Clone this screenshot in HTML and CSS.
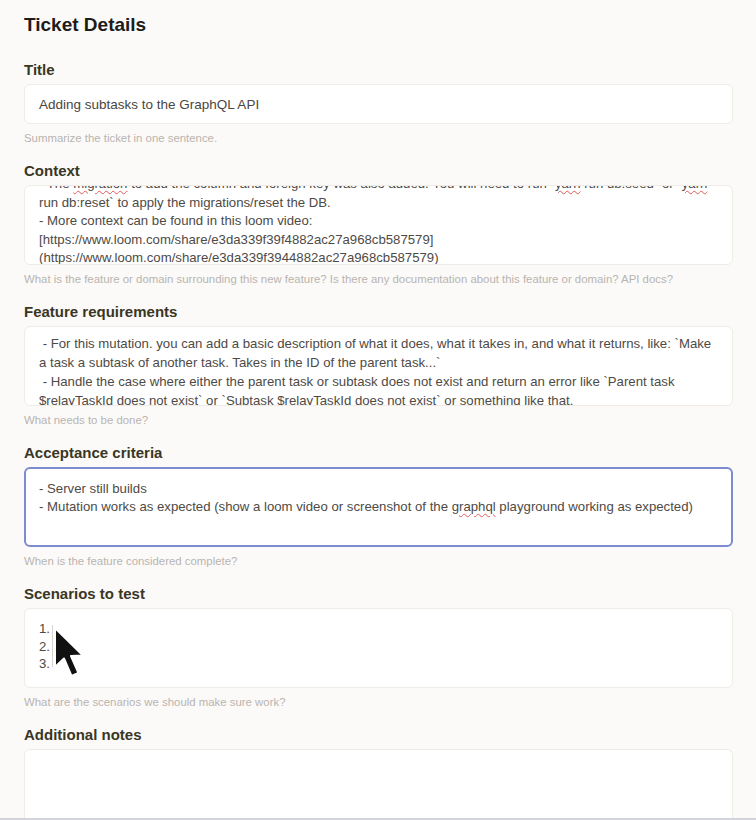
FILE: index.html
```html
<!DOCTYPE html>
<html lang="en">
<head>
<meta charset="utf-8">
<title>Ticket Details</title>
<link rel="stylesheet" href="styles.css">
</head>
<body>
<main class="page">
  <h1 class="page-title">Ticket Details</h1>

  <section class="field">
    <label class="field-label">Title</label>
    <div class="input">Adding subtasks to the GraphQL API</div>
    <p class="help">Summarize the ticket in one sentence.</p>
  </section>

  <section class="field">
    <label class="field-label">Context</label>
    <div class="textarea">
      <div class="scroll scroll-context">
        <div class="line">- The <span class="spell">migration</span> to add the column and foreign key was also added. You will need to run `<span class="spell">yarn</span> run db:seed` or `<span class="spell">yarn</span></div>
        <div class="line">run db:reset` to apply the migrations/reset the DB.</div>
        <div class="line">- More context can be found in this loom video:</div>
        <div class="line">[https://www.loom.com/share/e3da339f39f4882ac27a968cb587579]</div>
        <div class="line">(https://www.loom.com/share/e3da339f3944882ac27a968cb587579)</div>
      </div>
    </div>
    <p class="help">What is the feature or domain surrounding this new feature? Is there any documentation about this feature or domain? API docs?</p>
  </section>

  <section class="field">
    <label class="field-label">Feature requirements</label>
    <div class="textarea">
      <div class="scroll scroll-feature">
        <div class="line">&nbsp;- For this mutation. you can add a basic description of what it does, what it takes in, and what it returns, like: `Make</div>
        <div class="line">a task a subtask of another task. Takes in the ID of the parent task...`</div>
        <div class="line">&nbsp;- Handle the case where either the parent task or subtask does not exist and return an error like `Parent task</div>
        <div class="line">$relayTaskId does not exist` or `Subtask $relayTaskId does not exist` or something like that.</div>
      </div>
    </div>
    <p class="help">What needs to be done?</p>
  </section>

  <section class="field">
    <label class="field-label">Acceptance criteria</label>
    <div class="textarea textarea-focus">
      <div class="scroll scroll-accept">
        <div class="line">- Server still builds</div>
        <div class="line">- Mutation works as expected (show a loom video or screenshot of the <span class="spell">graphql</span> playground working as expected)</div>
      </div>
    </div>
    <p class="help">When is the feature considered complete?</p>
  </section>

  <section class="field">
    <label class="field-label">Scenarios to test</label>
    <div class="textarea">
      <div class="scroll scroll-scen">
        <div class="line">1.</div>
        <div class="line">2.</div>
        <div class="line">3.</div>
      </div>
      <span class="caret"></span>
      <svg class="pointer" width="34" height="56" viewBox="0 0 34 56" aria-hidden="true">
        <path d="M3 2 L3 41 L12 32.5 L19.5 50 L26.5 47 L19 30 L31 29.5 Z" fill="#111" stroke="#fff" stroke-width="2" stroke-linejoin="round"/>
      </svg>
    </div>
    <p class="help">What are the scenarios we should make sure work?</p>
  </section>

  <section class="field">
    <label class="field-label">Additional notes</label>
    <div class="textarea textarea-notes"></div>
  </section>
</main>
<div class="viewport-edge"></div>
</body>
</html>
```

FILE: styles.css
```css
html, body {
  margin: 0;
  padding: 0;
}

body {
  background: #fbfaf9;
  font-family: "Liberation Sans", Arial, sans-serif;
  color: #3d3a36;
  overflow: hidden;
}

.page {
  padding: 14px 23px 0 24px;
  display: flex;
  flex-direction: column;
}

.page-title {
  margin: 0 0 25px 0;
  font-size: 19px;
  line-height: 22px;
  font-weight: 700;
  color: #1d1c1a;
}

.field {
  display: flex;
  flex-direction: column;
  margin-bottom: 17px;
}

.field-label {
  display: block;
  font-size: 15px;
  line-height: 18px;
  font-weight: 700;
  color: #3a3624;
  margin-bottom: 5px;
}

.input {
  height: 40px;
  box-sizing: border-box;
  background: #fff;
  border: 1px solid #efebe7;
  border-radius: 6px;
  padding: 0 14px;
  display: flex;
  align-items: center;
  font-size: 13.5px;
  color: #4a4640;
}

.help {
  margin: 7px 0 0 0;
  font-size: 11.4px;
  line-height: 14px;
  color: #b9b4af;
}

.textarea {
  position: relative;
  height: 80px;
  box-sizing: border-box;
  background: #fff;
  border: 1px solid #efebe7;
  border-radius: 6px;
  overflow: hidden;
  padding: 0 14px;
}

.textarea-focus {
  border: 2px solid #7d8bcf;
  padding: 0 13px;
}

.textarea-notes {
  height: 90px;
  border-bottom: none;
  border-radius: 6px 6px 0 0;
}

.scroll {
  font-size: 13.2px;
  line-height: 18.5px;
  color: #4e4a45;
  white-space: nowrap;
}

.scroll-context {
  margin-top: -11px;
}

.scroll-feature {
  margin-top: 7px;
  line-height: 19px;
}

.scroll-accept {
  margin-top: 10.5px;
  line-height: 18px;
}

.scroll-scen {
  margin-top: 11px;
  line-height: 17.5px;
}

.spell {
  text-decoration: underline wavy #e05a5a;
  text-decoration-thickness: 1px;
  text-underline-offset: 2px;
}

.caret {
  position: absolute;
  left: 27px;
  top: 16px;
  width: 1px;
  height: 42px;
  background: #d6d3cf;
}

.pointer {
  position: absolute;
  left: 27px;
  top: 17px;
}

.viewport-edge {
  position: fixed;
  left: 0;
  right: 0;
  bottom: 0;
  height: 2px;
  background: #d3d3dc;
}
```
